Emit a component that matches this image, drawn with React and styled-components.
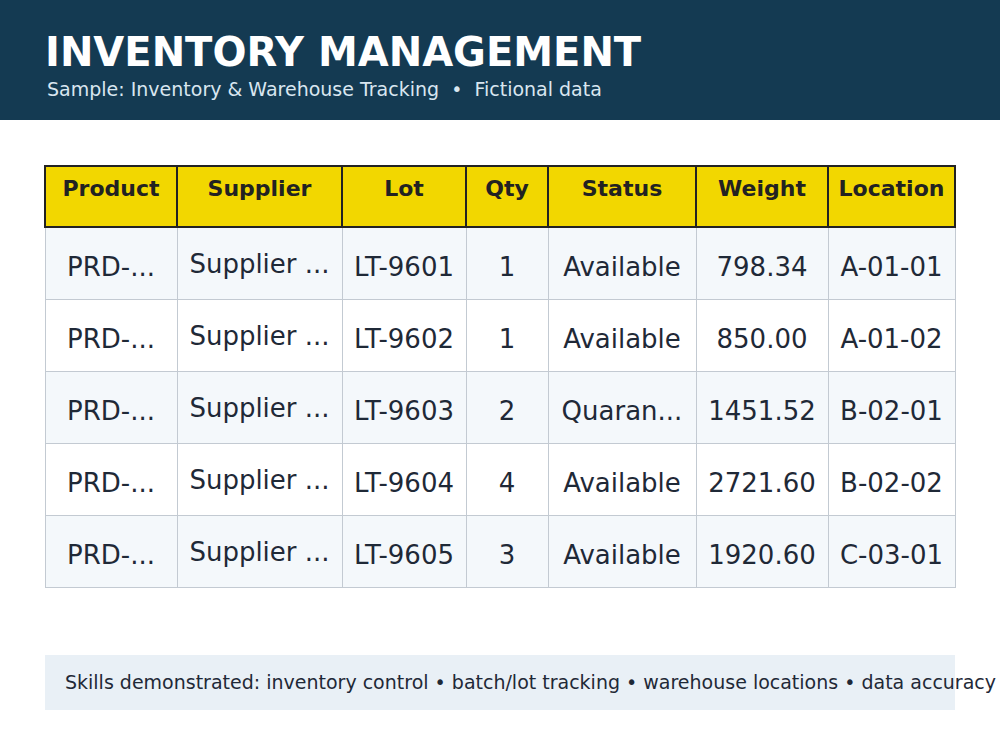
import React from "react";
import styled, { createGlobalStyle } from "styled-components";

const Global = createGlobalStyle`
  html, body { margin: 0; padding: 0; background: #ffffff; }
  body { font-family: "DejaVu Sans", "Liberation Sans", sans-serif; }
`;

const Page = styled.div`
  width: 1000px;
  height: 750px;
  overflow: hidden;
  display: flex;
  flex-direction: column;
`;

const Banner = styled.header`
  height: 120px;
  box-sizing: border-box;
  background: #143a52;
  padding: 29px 45px 0;
  display: flex;
  flex-direction: column;
  gap: 2px;
`;

const Title = styled.h1`
  margin: 0;
  font-size: 40px;
  font-weight: 700;
  color: #ffffff;
  line-height: 1.164;
`;

const Subtitle = styled.div`
  margin-left: 2px;
  font-size: 19px;
  color: #d9e6f0;
  white-space: pre;
  line-height: 1.164;
`;

const Body = styled.main`
  padding: 45px 44px 0;
  display: flex;
  flex-direction: column;
  gap: 67px;
`;

const Table = styled.table`
  width: 910px;
  table-layout: fixed;
  border-collapse: collapse;
`;

const Th = styled.th`
  height: 61px;
  box-sizing: border-box;
  background: #f2d700;
  border: 2px solid #222222;
  color: #222222;
  font-size: 22px;
  font-weight: 700;
  vertical-align: top;
  padding: 9px 2px 0;
  text-align: center;
  white-space: nowrap;
  overflow: hidden;
`;

const Tr = styled.tr`
  background: ${(p) => (p.$alt ? "#f4f8fb" : "#ffffff")};
`;

const Td = styled.td`
  height: 72px;
  box-sizing: border-box;
  border: 1px solid #c3cad2;
  color: #1f2937;
  font-size: 26px;
  text-align: center;
  vertical-align: middle;
  padding: ${(p) => (p.$raised ? "2px 4px 0" : "8px 4px 0")};
  white-space: nowrap;
  overflow: hidden;
`;

const Footer = styled.div`
  height: 55px;
  width: 910px;
  margin-left: 1px;
  box-sizing: border-box;
  background: #e9f0f6;
  padding: 0 20px;
  display: flex;
  align-items: center;
  font-size: 19px;
  color: #1f2937;
  white-space: nowrap;
`;

const columns = [
  { key: "product", label: "Product", width: 132 },
  { key: "supplier", label: "Supplier", width: 165, raised: true },
  { key: "lot", label: "Lot", width: 124 },
  { key: "qty", label: "Qty", width: 82 },
  { key: "status", label: "Status", width: 148 },
  { key: "weight", label: "Weight", width: 132 },
  { key: "location", label: "Location", width: 127 },
];

const rows = [
  { product: "PRD-...", supplier: "Supplier ...", lot: "LT-9601", qty: "1", status: "Available", weight: "798.34", location: "A-01-01" },
  { product: "PRD-...", supplier: "Supplier ...", lot: "LT-9602", qty: "1", status: "Available", weight: "850.00", location: "A-01-02" },
  { product: "PRD-...", supplier: "Supplier ...", lot: "LT-9603", qty: "2", status: "Quaran...", weight: "1451.52", location: "B-02-01" },
  { product: "PRD-...", supplier: "Supplier ...", lot: "LT-9604", qty: "4", status: "Available", weight: "2721.60", location: "B-02-02" },
  { product: "PRD-...", supplier: "Supplier ...", lot: "LT-9605", qty: "3", status: "Available", weight: "1920.60", location: "C-03-01" },
];

export default function App() {
  return (
    <Page>
      <Global />
      <Banner>
        <Title>INVENTORY MANAGEMENT</Title>
        <Subtitle>{"Sample: Inventory & Warehouse Tracking  •  Fictional data"}</Subtitle>
      </Banner>
      <Body>
        <Table>
          <colgroup>
            {columns.map((c) => (
              <col key={c.key} style={{ width: c.width }} />
            ))}
          </colgroup>
          <thead>
            <tr>
              {columns.map((c) => (
                <Th key={c.key}>{c.label}</Th>
              ))}
            </tr>
          </thead>
          <tbody>
            {rows.map((r, i) => (
              <Tr key={r.lot} $alt={i % 2 === 0}>
                {columns.map((c) => (
                  <Td key={c.key} $raised={c.raised}>
                    {r[c.key]}
                  </Td>
                ))}
              </Tr>
            ))}
          </tbody>
        </Table>
        <Footer>
          Skills demonstrated: inventory control • batch/lot tracking • warehouse locations • data accuracy
        </Footer>
      </Body>
    </Page>
  );
}
